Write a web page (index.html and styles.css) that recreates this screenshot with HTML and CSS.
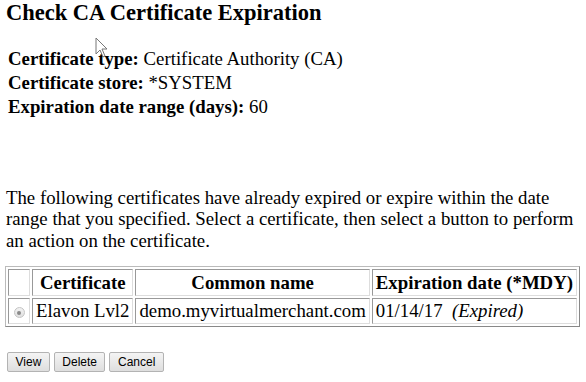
FILE: index.html
```html
<!DOCTYPE html>
<html>
<head>
<meta charset="utf-8">
<link rel="stylesheet" href="styles.css">
</head>
<body>
<div class="page">
  <h1 class="title">Check CA Certificate Expiration</h1>
  <div class="info">
    <div class="info-row"><b>Certificate type:</b> Certificate Authority (CA)</div>
    <div class="info-row"><b>Certificate store:</b> *SYSTEM</div>
    <div class="info-row"><b>Expiration date range (days):</b> 60</div>
  </div>
  <p class="intro">The following certificates have already expired or expire within the date range that you specified. Select a certificate, then select a button to perform an action on the certificate.</p>
  <table class="certs">
    <tr>
      <th class="sel"></th>
      <th>Certificate</th>
      <th>Common name</th>
      <th>Expiration date (*MDY)</th>
    </tr>
    <tr>
      <td class="sel"><span class="radio"><span class="dot"></span></span></td>
      <td>Elavon Lvl2</td>
      <td>demo.myvirtualmerchant.com</td>
      <td>01/14/17&nbsp; <i>(Expired)</i></td>
    </tr>
  </table>
  <div class="buttons">
    <button class="btn">View</button>
    <button class="btn">Delete</button>
    <button class="btn">Cancel</button>
  </div>
</div>
<svg class="cursor" width="14" height="22" viewBox="0 0 14 22"><path d="M1 1 L1 17 L5 13 L8 20 L10 19 L7 12 L12 12 Z" fill="#fff" stroke="#777" stroke-width="1"/></svg>
</body>
</html>
```
FILE: styles.css
```css
html, body { margin: 0; padding: 0; background: #fff; }
body { font-family: "Liberation Serif", "Times New Roman", serif; color: #000; position: relative; }
.page { padding: 0 6px; }
.title { font-size: 22.5px; font-weight: bold; margin: 0; padding-top: 0; line-height: 26px; }
.info { margin-top: 21px; padding-left: 2px; font-size: 18.8px; }
.info-row { line-height: 24.2px; }
.intro { font-size: 18.8px; line-height: 21.6px; margin: 67px 0 0 0; }
.certs { margin-top: 15px; margin-left: -1px; border: 1px solid #bbb; border-right-color: #888; border-bottom-color: #888; border-spacing: 2px; font-size: 18.8px; }
.certs th, .certs td { border: 1px solid #999; border-right-color: #ddd; border-bottom-color: #ddd; padding: 0 3px; white-space: nowrap; }
.certs th { height: 27px; box-sizing: border-box; padding-top: 1px; }
.certs td { height: 26px; box-sizing: border-box; }
.certs .sel { width: 27px; box-sizing: border-box; text-align: center; }
.radio { display: inline-block; width: 11px; height: 11px; border-radius: 50%; border: 1px solid #c4c4c4; background: linear-gradient(#f2f2f2, #e0e0e0); position: relative; vertical-align: -1px; box-sizing: border-box; }
.dot { position: absolute; left: 2.5px; top: 2.5px; width: 4px; height: 4px; border-radius: 50%; background: #8a8a8a; }
.buttons { margin-top: 25px; display: flex; gap: 4px; padding-left: 1px; }
.btn { font-family: "Liberation Sans", Arial, sans-serif; font-size: 12px; color: #000; background: linear-gradient(#f4f4f4, #dedede); border: 1px solid #b3b3b3; border-radius: 2px; padding: 0 7.5px; height: 20px; }
.cursor { position: absolute; left: 95px; top: 37px; }
```
